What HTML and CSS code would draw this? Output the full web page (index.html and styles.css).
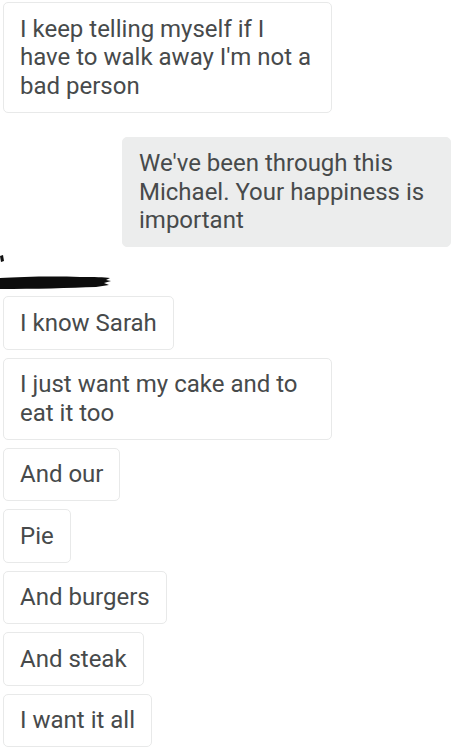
FILE: index.html
```html
<!DOCTYPE html>
<html lang="en">
<head>
    <meta charset="UTF-8">
    <title>Chat</title>
    <link rel="stylesheet" href="styles.css">
</head>
<body>
    <div class="thread">
        <div class="msg in">I keep telling myself if I have to walk away I'm not a bad person</div>
        <div class="msg out">We've been through this Michael. Your happiness is important</div>
        <div class="sender">
            <svg class="scribble" width="120" height="34" viewBox="0 0 120 34">
                <path d="M0 1 L3 0 L4 6 L1 7 Z" fill="#111"/>
                <path d="M0 23 C20 22 50 21 80 22 C95 22 104 22 110 23 L106 25 L111 26 L104 28 L109 30 L96 32 C70 33 35 34 0 34 Z" fill="#0d0d0d"/>
            </svg>
        </div>
        <div class="msg in">I know Sarah</div>
        <div class="msg in">I just want my cake and to eat it too</div>
        <div class="msg in">And our</div>
        <div class="msg in">Pie</div>
        <div class="msg in">And burgers</div>
        <div class="msg in">And steak</div>
        <div class="msg in">I want it all</div>
    </div>
</body>
</html>
```

FILE: styles.css
```css
body {
    margin: 0;
    background-color: #fff;
    font-family: Roboto, "Noto Sans", sans-serif;
}
.thread {
    display: flex;
    flex-direction: column;
    align-items: flex-start;
    gap: 8px;
    padding: 2px 13px 0 3px;
}
.msg {
    box-sizing: border-box;
    max-width: 329px;
    padding: 11.5px 16px;
    font-size: 24px;
    line-height: 28.5px;
    color: #474a4b;
    border: 1px solid #e8e9e9;
    border-radius: 5px;
    background-color: #fff;
}
.msg.out {
    align-self: flex-end;
    margin-top: 16px;
    background-color: #eceded;
    border-color: #eceded;
}
.sender {
    height: 33px;
    margin-left: -3px;
}
.scribble {
    display: block;
}
```
